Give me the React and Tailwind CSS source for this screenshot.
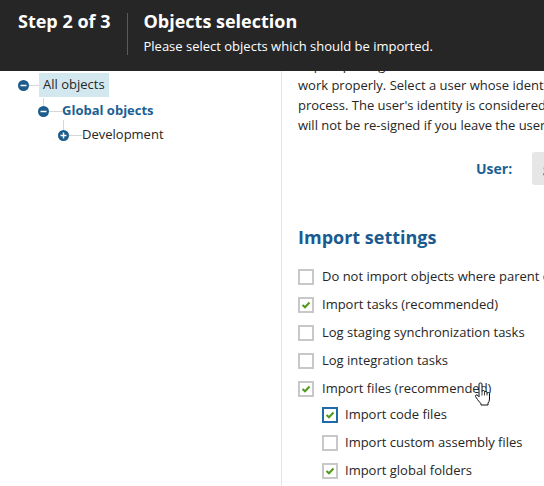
import React from 'react';

const TreeIcon = ({ open }) => (
  <svg width="11" height="11" viewBox="0 0 11 11" className="shrink-0">
    <circle cx="5.5" cy="5.5" r="5.5" fill="#1b5c8c" />
    <rect x="2.5" y="4.75" width="6" height="1.5" fill="#fff" />
    {!open && <rect x="4.75" y="2.5" width="1.5" height="6" fill="#fff" />}
  </svg>
);

const Checkbox = ({ checked, focused }) => (
  <span
    className={`w-[16px] h-[16px] shrink-0 border-2 bg-white flex items-center justify-center ${
      focused ? 'border-[#1f6aa8]' : 'border-[#c8c8c8]'
    }`}
  >
    {checked && (
      <svg width="10" height="8" viewBox="0 0 10 8">
        <path d="M1.5 4 L4 6.3 L8.5 1.5" fill="none" stroke="#4f9a1a" strokeWidth="2" />
      </svg>
    )}
  </span>
);

const HandCursor = () => (
  <svg width="18" height="24" viewBox="0 0 18 24">
    <path
      d="M5 2 Q5 1 6.5 1 Q8 1 8 2 L8 9.5 Q8 8.5 9.25 8.5 Q10.5 8.5 10.5 9.5 L10.5 10.5 Q10.5 9.5 11.75 9.5 Q13 9.5 13 10.5 L13 11.5 Q13 10.5 14.25 10.5 Q15.5 10.5 15.5 11.5 L15.5 17 Q15.5 19.5 14 21 L14 23 L7 23 L7 21.5 Q5 20 3.5 17.5 L1.5 14.5 Q1 13.5 2 13 Q3 12.6 4 13.6 L5 14.8 Z"
      fill="#fff"
      stroke="#111"
      strokeWidth="1"
      strokeLinejoin="round"
    />
    <path d="M8 9.5 V13.5 M10.5 10.5 V13.5 M13 11.5 V13.5" stroke="#111" strokeWidth="0.8" />
  </svg>
);

const settings = [
  { label: 'Do not import objects where parent object is missing', checked: false },
  { label: 'Import tasks (recommended)', checked: true },
  { label: 'Log staging synchronization tasks', checked: false },
  { label: 'Log integration tasks', checked: false },
  { label: 'Import files (recommended)', checked: true },
];

const fileSettings = [
  { label: 'Import code files', checked: true, focused: true },
  { label: 'Import custom assembly files', checked: false },
  { label: 'Import global folders', checked: true },
];

const App = () => {
  return (
    <div className="relative w-[544px] h-[486px] overflow-hidden bg-white font-['Open_Sans',sans-serif] text-[#262626]">
      {/* Wizard header */}
      <div className="relative z-10 h-[71px] bg-[#262626] text-white flex pt-[9px] pl-[18px]">
        <div className="text-[18px] leading-[24px] font-bold pr-[17px]">Step 2 of 3</div>
        <div className="border-l border-[#5a5a5a] h-[42px] mt-[4px] pl-[15px]">
          <div className="text-[18px] leading-[24px] font-bold -mt-[4px]">Objects selection</div>
          <div className="text-[13px] leading-[18px] mt-[4px]">
            Please select objects which should be imported.
          </div>
        </div>
      </div>

      <div className="flex h-[415px]">
        {/* Object tree */}
        <div className="w-[282px] shrink-0 border-r border-[#e5e5e5] text-[13px]">
          <div className="flex items-center h-[24px] pl-[18px] mt-[2px]">
            <TreeIcon open />
            <span className="w-[10px] h-px bg-[#d6d6d6]" />
            <span className="bg-[#d3e8ee] h-[24px] px-[4px] flex items-center">All objects</span>
          </div>
          <div className="flex items-center h-[24px] pl-[38px] mt-[2px]">
            <span className="relative">
              <TreeIcon open />
              <span className="absolute left-[5px] -top-[8px] w-px h-[8px] bg-[#d6d6d6]" />
            </span>
            <span className="w-[13px] h-px bg-[#d6d6d6]" />
            <span className="font-bold text-[#1b5f93]">Global objects</span>
          </div>
          <div className="flex items-center h-[24px] pl-[58px]">
            <span className="relative">
              <TreeIcon />
              <span className="absolute left-[5px] -top-[10px] w-px h-[10px] bg-[#d6d6d6]" />
            </span>
            <span className="w-[13px] h-px bg-[#d6d6d6]" />
            <span>Development</span>
          </div>
        </div>

        {/* Settings */}
        <div className="pl-[16px] w-[480px] shrink-0 text-[13px]">
          <div className="leading-[20px] -mt-[16px] whitespace-nowrap">
            <div>Import package contains macros which must be re-signed to</div>
            <div>work properly. Select a user whose identity will be used for the</div>
            <div>process. The user's identity is considered as a security context.</div>
            <div>will not be re-signed if you leave the user field empty.</div>
          </div>

          <div className="flex items-center mt-[17px]">
            <span className="ml-[178px] w-[32px] font-bold text-[#1b5f93] text-[14px]">User:</span>
            <span className="ml-[24px] w-[200px] h-[33px] bg-[#e6e6e6] rounded-[3px] flex items-center pl-[11px] text-[#555]">
              global
            </span>
          </div>

          <h2 className="mt-[40px] text-[18px] leading-[24px] font-bold text-[#1a5a8f]">Import settings</h2>

          <div className="mt-[14px]">
            {settings.map((s) => (
              <div key={s.label} className="flex items-center h-[28px] gap-[8px] whitespace-nowrap">
                <Checkbox checked={s.checked} />
                <span>{s.label}</span>
              </div>
            ))}
            <div className="-mt-[2px] pl-[24px]">
              {fileSettings.map((s) => (
                <div key={s.label} className="flex items-center h-[28px] gap-[7px] whitespace-nowrap">
                  <Checkbox checked={s.checked} focused={s.focused} />
                  <span>{s.label}</span>
                </div>
              ))}
            </div>
          </div>
        </div>
      </div>

      {/* Mouse pointer over "Import files" */}
      <div className="absolute left-[474px] top-[382px] z-20">
        <HandCursor />
      </div>
    </div>
  );
};

export default App;
